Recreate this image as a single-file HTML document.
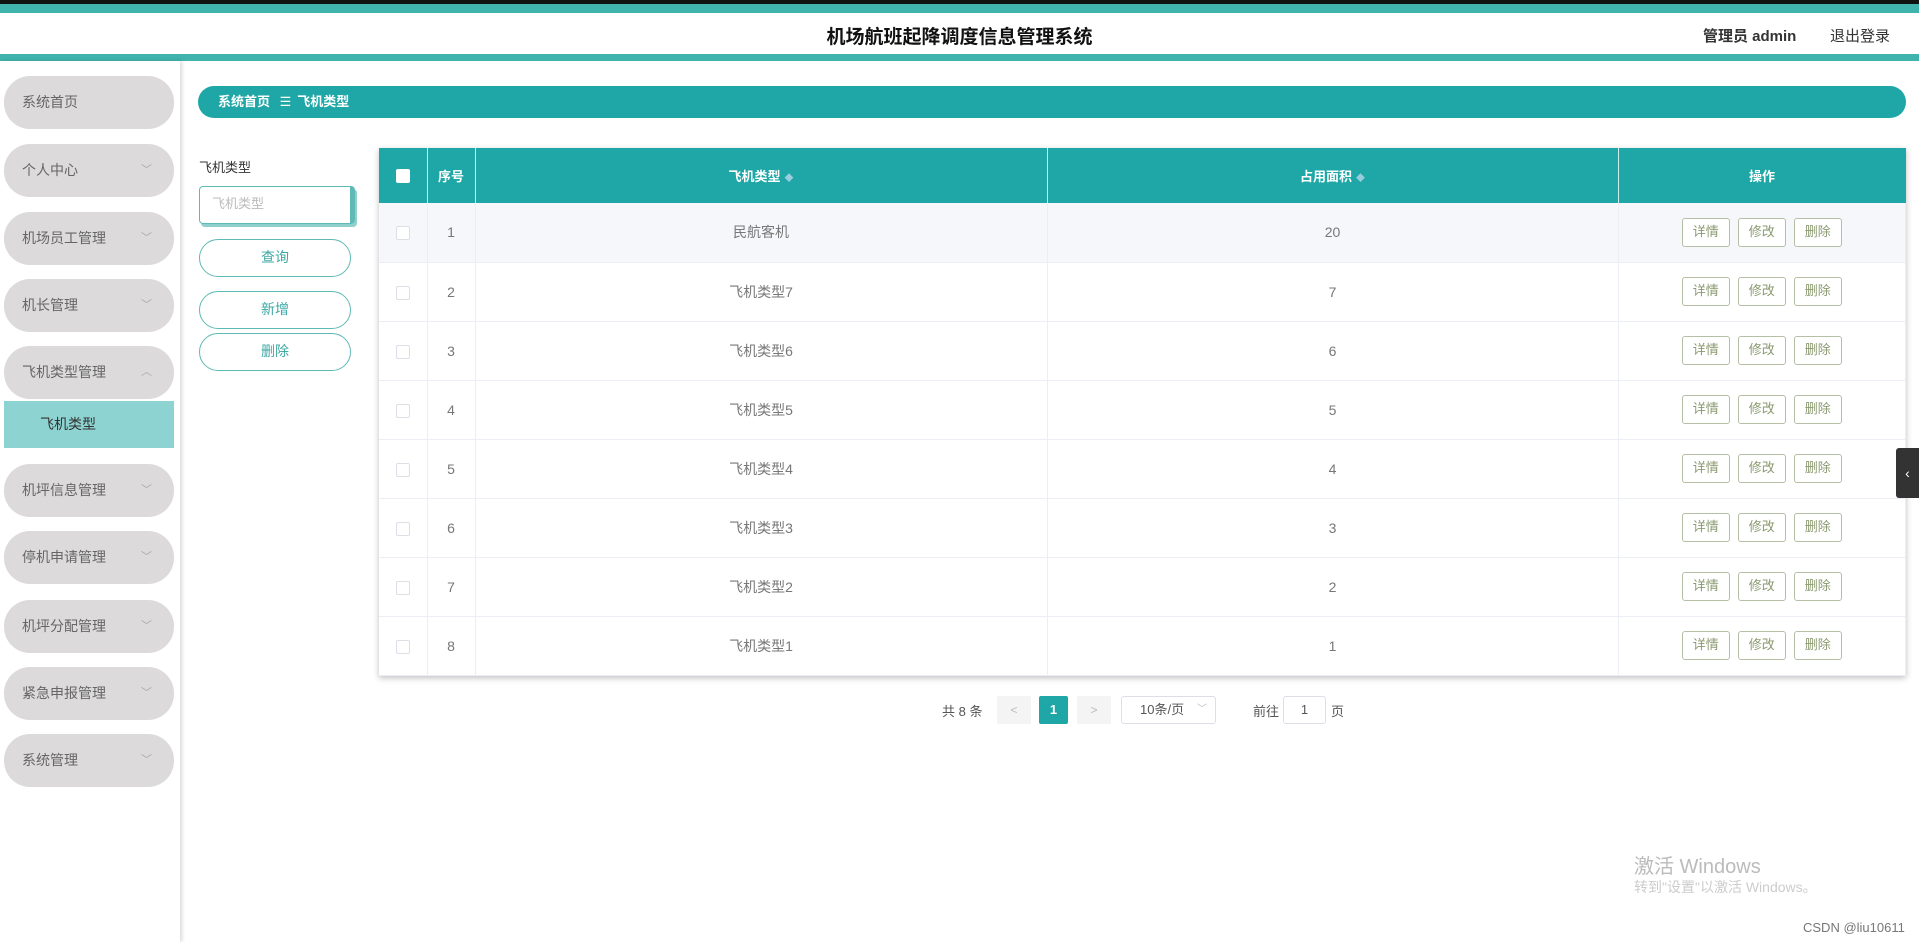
<!DOCTYPE html>
<html><head><meta charset="utf-8"><style>
*{box-sizing:border-box;margin:0;padding:0}
body{width:1919px;height:942px;overflow:hidden;background:#fff;font-family:"Liberation Sans","Noto Sans CJK SC",sans-serif;position:relative;color:#333}
.a{position:absolute}
.side{left:0;top:61px;width:180px;height:881px;background:#fff;box-shadow:2px 0 4px rgba(0,0,0,.15)}
.mi{position:absolute;left:4px;width:170px;height:53px;border-radius:26px;background:#dcdadb;color:#666;font-size:14px;line-height:53px;padding-left:18px}
.mi .ar{position:absolute;right:22px;top:0;color:#aaa;font-size:11px}
.btn{position:absolute;left:199px;width:152px;height:38px;border:1.5px solid #5fbab6;border-radius:19px;text-align:center;line-height:35px;color:#3fa8a4;font-size:14px;background:#fff}
table{border-collapse:collapse;width:100%}
.tb{left:379px;top:148px;width:1527px;box-shadow:0 2px 6px rgba(0,0,0,.25)}
th{background:#1ea7a6;color:#fff;height:55px;font-size:13px;font-weight:bold;border-right:1px solid #d0eeee}
td{height:59px;text-align:center;color:#777;font-size:14px;border-bottom:1px solid #ebeef5;border-right:1px solid #ebeef5}
tr.f td{background:#f6f7fb}
.cb{display:inline-block;width:14px;height:14px;border:1px solid #dcdfe6;border-radius:2px;background:#fff;vertical-align:middle}
.ob{display:inline-block;width:48px;height:29px;border:1.5px solid #b5bfa5;border-radius:3px;line-height:26px;color:#8a9a70;font-size:13px;margin:0 4px;background:#fff}
.so{font-size:9px;color:#9cd;margin-left:4px}
</style></head><body>
<div class="a" style="left:0;top:0;width:1919px;height:4px;background:#111"></div>
<div class="a" style="left:0;top:4px;width:1919px;height:9px;background:#41b3ae"></div>
<div class="a" style="left:0;top:54px;width:1919px;height:7px;background:#41b3ae"></div>
<div class="a" style="left:0;top:22px;width:1919px;text-align:center;font-size:19px;font-weight:bold;color:#111">机场航班起降调度信息管理系统</div>
<div class="a" style="left:1703px;top:25px;font-size:15px;color:#333;font-weight:bold">管理员 admin</div>
<div class="a" style="left:1830px;top:25px;font-size:15px;color:#333">退出登录</div>

<div class="a side"></div>
<div class="mi" style="top:76px">系统首页</div>
<div class="mi" style="top:144px">个人中心<span class="ar">﹀</span></div>
<div class="mi" style="top:212px">机场员工管理<span class="ar">﹀</span></div>
<div class="mi" style="top:279px">机长管理<span class="ar">﹀</span></div>
<div class="mi" style="top:346px">飞机类型管理<span class="ar">︿</span></div>
<div class="a" style="left:4px;top:401px;width:170px;height:47px;background:#8dd3d1;color:#333;font-size:14px;line-height:47px;padding-left:36px">飞机类型</div>
<div class="mi" style="top:464px">机坪信息管理<span class="ar">﹀</span></div>
<div class="mi" style="top:531px">停机申请管理<span class="ar">﹀</span></div>
<div class="mi" style="top:600px">机坪分配管理<span class="ar">﹀</span></div>
<div class="mi" style="top:667px">紧急申报管理<span class="ar">﹀</span></div>
<div class="mi" style="top:734px">系统管理<span class="ar">﹀</span></div>

<div class="a" style="left:198px;top:86px;width:1708px;height:32px;border-radius:16px;background:#1ea7a6;color:#fff;font-size:13px;font-weight:bold;line-height:32px;padding-left:20px">系统首页 <span style="font-weight:normal;margin:0 6px">☰</span>飞机类型</div>

<div class="a" style="left:199px;top:157px;font-size:13px;color:#333">飞机类型</div>
<div class="a" style="left:199px;top:186px;width:156px;height:38px;border:1.5px solid #5fbab6;border-right:5px solid #5fbab6;border-radius:4px;color:#bbb;font-size:13px;line-height:34px;padding-left:12px;box-shadow:2px 3px 0 #8fd0cc">飞机类型</div>
<div class="btn" style="top:239px">查询</div>
<div class="btn" style="top:291px">新增</div>
<div class="btn" style="top:333px">删除</div>

<div class="a tb"><table>
<tr><th style="width:48px"><span class="cb" style="border:none"></span></th><th style="width:48px">序号</th><th style="width:572px">飞机类型<span class="so">◆</span></th><th style="width:571px">占用面积<span class="so">◆</span></th><th style="border-right:none">操作</th></tr>
<tr class="f"><td><span class="cb"></span></td><td>1</td><td>民航客机</td><td>20</td><td><span class="ob">详情</span><span class="ob">修改</span><span class="ob">删除</span></td></tr>
<tr><td><span class="cb"></span></td><td>2</td><td>飞机类型7</td><td>7</td><td><span class="ob">详情</span><span class="ob">修改</span><span class="ob">删除</span></td></tr>
<tr><td><span class="cb"></span></td><td>3</td><td>飞机类型6</td><td>6</td><td><span class="ob">详情</span><span class="ob">修改</span><span class="ob">删除</span></td></tr>
<tr><td><span class="cb"></span></td><td>4</td><td>飞机类型5</td><td>5</td><td><span class="ob">详情</span><span class="ob">修改</span><span class="ob">删除</span></td></tr>
<tr><td><span class="cb"></span></td><td>5</td><td>飞机类型4</td><td>4</td><td><span class="ob">详情</span><span class="ob">修改</span><span class="ob">删除</span></td></tr>
<tr><td><span class="cb"></span></td><td>6</td><td>飞机类型3</td><td>3</td><td><span class="ob">详情</span><span class="ob">修改</span><span class="ob">删除</span></td></tr>
<tr><td><span class="cb"></span></td><td>7</td><td>飞机类型2</td><td>2</td><td><span class="ob">详情</span><span class="ob">修改</span><span class="ob">删除</span></td></tr>
<tr><td><span class="cb"></span></td><td>8</td><td>飞机类型1</td><td>1</td><td><span class="ob">详情</span><span class="ob">修改</span><span class="ob">删除</span></td></tr>
</table></div>

<div class="a" style="left:942px;top:701px;font-size:13px;color:#555">共 8 条</div>
<div class="a" style="left:997px;top:696px;width:34px;height:28px;background:#f4f4f5;color:#bbb;text-align:center;line-height:28px;font-size:12px">&lt;</div>
<div class="a" style="left:1039px;top:696px;width:29px;height:28px;background:#1ea7a6;color:#fff;text-align:center;line-height:28px;font-size:13px;font-weight:bold;border-radius:2px">1</div>
<div class="a" style="left:1077px;top:696px;width:34px;height:28px;background:#f4f4f5;color:#bbb;text-align:center;line-height:28px;font-size:12px">&gt;</div>
<div class="a" style="left:1121px;top:696px;width:95px;height:28px;border:1px solid #dcdfe6;border-radius:3px;font-size:13px;color:#555;line-height:26px;padding-left:18px">10条/页<span style="position:absolute;right:8px;color:#bbb;font-size:10px">﹀</span></div>
<div class="a" style="left:1253px;top:701px;font-size:13px;color:#555">前往</div>
<div class="a" style="left:1283px;top:696px;width:43px;height:28px;border:1px solid #dcdfe6;border-radius:3px;text-align:center;line-height:26px;font-size:13px;color:#555">1</div>
<div class="a" style="left:1331px;top:701px;font-size:13px;color:#555">页</div>

<div class="a" style="left:1896px;top:448px;width:23px;height:50px;background:#333;border-radius:3px 0 0 3px;color:#fff;text-align:center;line-height:50px;font-size:14px">‹</div>
<div class="a" style="left:1634px;top:850px;font-size:20px;color:#bbb">激活 Windows</div>
<div class="a" style="left:1634px;top:877px;font-size:14px;color:#ccc">转到"设置"以激活 Windows。</div>
<div class="a" style="left:1803px;top:920px;font-size:13px;color:#777">CSDN @liu10611</div>
</body></html>
